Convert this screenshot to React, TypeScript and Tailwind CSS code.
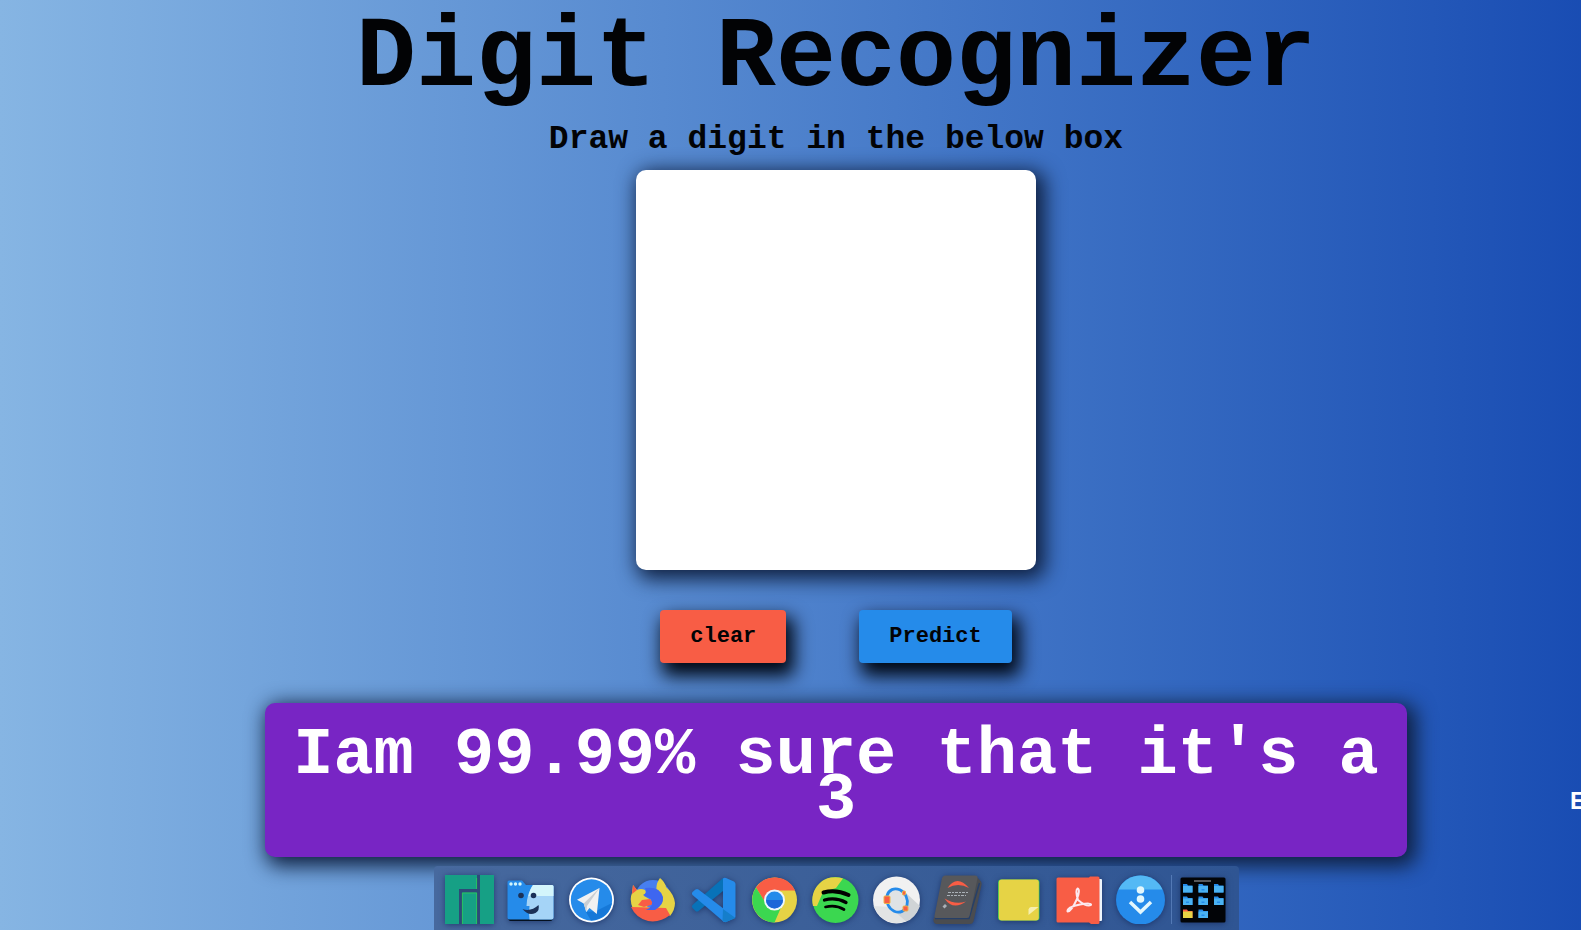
import React from "react";

const mono = "font-['Liberation_Mono',monospace]";

function Icon({ label, children }: { label: string; children: React.ReactNode }) {
  return (
    <li className="flex w-[61px] justify-center">
      <button type="button" aria-label={label} className="block drop-shadow-[0_1px_3px_rgba(20,40,90,0.7)]">
        <svg width="49" height="49" viewBox="0 0 49 49" aria-hidden="true">
          {children}
        </svg>
      </button>
    </li>
  );
}

const folderSpots = [
  [5, 10.5], [20.5, 10.5], [36, 10.5],
  [5, 23], [20.5, 23], [36, 23],
  [5, 36], [20.5, 36],
];

function Dock() {
  return (
    <nav aria-label="Dock" className="mt-[9px] rounded-t-[4px] bg-linear-to-r from-[#47699e] to-[#2f5593] pt-[9px] pr-[6px] pb-[6px] pl-[5px]">
      <ul className="flex">
        <Icon label="Manjaro">
          <path fill="#2d4a78" d="M13 13H36V49H13ZM31 0H36V14H31Z" />
          <path fill="#16a085" d="M0 0H32V14H14V49H0ZM17 17.500H32V49H17ZM35 0H49V49H35Z" />
          <path fill="none" stroke="#2ecc55" strokeWidth="0.8" d="M17.400 49V18H31.600V49M31.600 3V14" />
        </Icon>
        <Icon label="Files">
          <rect x="2.500" y="40" width="44" height="6" rx="2" fill="#04101f" />
          <path fill="#258bea" d="M1.500 7Q1.500 5.500 3 5.500H16L20 10H46Q47.500 10 47.500 11.500V42.500Q47.500 44.500 45.500 44.500H3.500Q1.500 44.500 1.500 42.500Z" />
          <path fill="#a5d4f7" d="M27 10H46Q47.500 10 47.500 11.500V42.500Q47.500 44.500 45.500 44.500H23.500Q22.500 38 23.500 31H20.500Q21 18 27 10Z" />
          <path fill="#d3f5fb" d="M27 10H46Q47.500 10 47.500 11.500V21H22.500Q24 14 27 10Z" />
          <g fill="#d3f5fb"><circle cx="5" cy="9" r="1.700" /><circle cx="9.500" cy="9" r="1.700" /><circle cx="14" cy="9" r="1.700" /></g>
          <circle cx="15" cy="20.500" r="2.800" fill="#1b3157" /><circle cx="27.500" cy="20.500" r="2.800" fill="#1b3157" />
          <path fill="#1b3157" d="M16.500 34Q25 37 32.500 30Q34 35 29.500 38Q22.500 41.500 16.500 34Z" />
        </Icon>
        <Icon label="Telegram">
          <circle cx="24.500" cy="25" r="22.500" fill="#fff" /><circle cx="24.500" cy="25" r="20.700" fill="#258bea" />
          <path fill="#1678d8" d="M19 37L29 36L45 28Q41 44 24 45.500Z" />
          <path fill="#f1f1f1" d="M10 24.700L32.500 13L29.800 39L22.500 33L19.300 37L16.700 28.500Z" />
          <path fill="#c9ced3" d="M16.700 28.500L32.500 13L20 31L19.300 37Z" />
        </Icon>
        <Icon label="Firefox">
          <circle cx="25" cy="23" r="18" fill="#477ff0" />
          <path fill="#e6d345" d="M32 3Q37 7 38 12Q46 19 47 28Q47 35 42 41L36 34L5 34Q1 25 4 18L5 10L9 15Q13 13 17 15Q19 18 16 21L23 25L19 32Q28 35 32 29Q36 24 30 20Q26 11 32 3Z" />
          <path fill="#f85d45" d="M3 32L38 33L42 40Q32 48 20 46Q8 43 3 32ZM14 25L22 24L26 29L16 32L10 30ZM5 10L9 15L4 19Z" />
          <path fill="#3e66f0" d="M17 13Q32 11 35 22Q36 30 27 35L18 35Q27 31 23 24L15 20Q20 18 17 13Z" />
        </Icon>
        <Icon label="Visual Studio Code">
          <path fill="#0872b8" d="M34 3V16L9.500 36Q8 37 6.500 36L3.500 33Q2.500 31.500 3.500 30Z" />
          <path fill="#258bea" d="M6.500 14.500Q8 13.500 9.500 14.500L35 34V47L3.500 20Q2.500 18.500 3.500 17Z" />
          <path fill="#258bea" d="M34 3.500Q35 2.500 37 3L45 6.500Q46.500 7.500 46.500 9V41.500Q46.500 43 45 43.500L37 47Q35.500 47.500 34 46Z" />
          <path fill="#157ecb" d="M34 34L46.500 43L37 47L33.500 46Z" />
        </Icon>
        <Icon label="Chrome">
          <circle cx="24.500" cy="25" r="22.500" fill="#e6d345" />
          <path fill="#f85d45" d="M6 12.500A22.500 22.500 0 0 1 45.200 15.500H24.500L15.500 28Z" />
          <path fill="#3bd750" d="M6 12.500L16.500 29.500L24.500 35L32.500 29L24.500 47.500A22.500 22.500 0 0 1 6 12.500Z" />
          <circle cx="24.500" cy="25" r="10.500" fill="#eef5fc" /><circle cx="24.500" cy="25" r="8.500" fill="#258bea" />
          <path fill="#1c66d8" d="M16 25H33A8.500 8.500 0 0 1 16 25Z" />
        </Icon>
        <Icon label="Spotify">
          <circle cx="24.500" cy="25" r="23" fill="#3bd750" />
          <path fill="#e6d345" d="M2 31A23 23 0 0 1 32 3.500L25 13L12 17L6 31Z" />
          <g fill="none" stroke="#000" strokeLinecap="round"><path strokeWidth="4" d="M12.500 17.500Q25 14 37.500 20" /><path strokeWidth="3.300" d="M13.500 25Q25 22 35 27.500" /><path strokeWidth="2.700" d="M14.500 32Q25 29.500 33 34.500" /></g>
        </Icon>
        <Icon label="Community">
          <circle cx="24.500" cy="25" r="23.500" fill="#f1f1f1" />
          <path fill="#e2e4e4" d="M1.500 31L19 32L34 46.500Q12 53 1.500 31Z" />
          <path fill="#d0d4d6" d="M34 18L48 31Q43 44 34 46.500L20 34Z" />
          <ellipse cx="25" cy="25.500" rx="10" ry="12" fill="#dfe3e5" stroke="#258bea" strokeWidth="2.800" transform="rotate(-25 25 25.500)" />
          <g fill="#f85d45" stroke="#e9b64a" strokeWidth="1"><rect x="12" y="21" width="6" height="7.500" rx="1" /><rect x="30.500" y="16" width="3" height="4" rx="1" /><rect x="31" y="31" width="5" height="5" rx="1" /></g>
        </Icon>
        <Icon label="Jupyter">
          <path fill="#4a4c50" d="M43 1L48 6.500Q49 8 48.500 10L40.500 46.500Q39.500 49 37 49H3Q0 48 0.500 44L4 39Z" />
          <path fill="none" stroke="#263f68" strokeWidth="1.500" d="M2 43.500H36L46.500 8" />
          <path fill="#57585b" d="M12 0.500H42Q45 0.500 44.500 3.500L36.500 41Q36 43 34 43H3Q1 43 1.500 40.500L9 3Q10 0.500 12 0.500Z" />
          <path fill="#f85d45" d="M14.500 13Q24 -1 36 13Q25 7 14.500 13ZM11.500 23.500Q22 30 33 26.500Q20 36 11.500 23.500Z" />
          <path stroke="#aab0b7" strokeWidth="1" strokeDasharray="3 1 2 1" d="M15 17.500H35M14 20.500H33" />
          <path fill="#aab0b7" d="M12 29L14 31L11.500 33.500L9.500 31.500Z" />
        </Icon>
        <Icon label="Notes">
          <rect x="4" y="4.500" width="41.500" height="41" rx="3" fill="#3bc552" /><rect x="4.800" y="4.500" width="40" height="41" rx="3" fill="#e6d345" />
          <path fill="#f6efae" d="M34.500 40V34.500Q35 32 37 32H44.500Z" />
        </Icon>
        <Icon label="PDF Reader">
          <rect x="40" y="4" width="7" height="42" rx="1" fill="#eef5fc" />
          <path fill="#f85d45" d="M3 2.500H34L35 1.500H43Q44.500 1.500 44.500 3V47.500Q44.500 49 43 49H36L34 47.500H3Q1.500 47.500 1.500 46V4Q1.500 2.500 3 2.500Z" />
          <path fill="none" stroke="#fce9f0" strokeWidth="2" strokeLinejoin="round" d="M23 25Q20 15 22.500 13.500Q25.500 14.500 22 24Q16 37 12.500 36.500Q12 32 25 29.500Q37 27.500 36 30Q32 32.500 23 25Z" />
        </Icon>
        <Icon label="Downloads">
          <circle cx="24.500" cy="25" r="24.500" fill="#258bea" />
          <path fill="#54b9f5" d="M2.400 14.500A24.500 24.500 0 0 1 46.600 14.500Z" />
          <circle cx="24.500" cy="15" r="3.800" fill="#e2f7fd" /><circle cx="24.500" cy="24" r="3.800" fill="#e2f7fd" />
          <path fill="none" stroke="#e2f7fd" strokeWidth="3.500" d="M14 27L24.500 37L35 27" />
        </Icon>
        <li aria-hidden="true" className="w-px bg-[#5379b5]" />
        <Icon label="Folder grid">
          <rect x="2.500" y="2.500" width="45" height="45" rx="1.500" fill="#020407" />
          <rect x="16" y="5" width="17" height="2" fill="#57585b" />
          {folderSpots.map(([x, y], i) => (
            <g key={i} transform={`translate(${x} ${y})`}>
              <path fill={i === 6 ? "#f85d45" : "#258bea"} d="M0 -1.500H4L5 0H9.500V7H0Z" />
              <rect y="0.500" width="9.500" height="6.500" fill={i === 6 ? "#e6d345" : "#4ab2f2"} />
              {i !== 6 && i !== 0 && i !== 2 && <rect x="3" y="3.500" width="3" height="1.500" fill="#258bea" />}
            </g>
          ))}
        </Icon>
      </ul>
    </nav>
  );
}

export default function App() {
  return (
    <div className="min-h-screen overflow-hidden">
      <div className={`relative flex min-h-screen w-[calc(100%+91px)] flex-col items-center bg-linear-to-r from-[#86b5e3] to-[#1346b0] text-[#020305] ${mono}`}>
        <h1 className="text-[100px] leading-[118px] font-bold whitespace-nowrap">Digit Recognizer</h1>
        <p id="prompt" className="mt-[2px] text-[33px] leading-[40px] font-bold whitespace-nowrap">Draw a digit in the below box</p>
        <canvas width={400} height={400} aria-labelledby="prompt" className="mt-[10px] size-[400px] shrink-0 rounded-[10px] bg-white shadow-[5px_5px_20px_4px_#0f2040]" />
        <div className="mt-10 flex gap-[73px] text-[22px] leading-[53px] font-bold">
          <button type="button" className="rounded-[4px] bg-[#f85d45] px-[30px] shadow-[5px_10px_18px_3px_#000814]">clear</button>
          <button type="button" className="rounded-[4px] bg-[#258bea] px-[30px] shadow-[5px_10px_18px_3px_#000814]">Predict</button>
        </div>
        <output className="mt-10 block w-[1142px] max-w-[90%] rounded-[10px] bg-[#7825c4] px-7 pt-[30px] pb-[34px] text-center text-[67px] leading-[45px] font-bold text-white shadow-[5px_5px_20px_4px_#0f2040]">
          Iam 99.99% sure that it's a 3
        </output>
        <Dock />
        <span className="absolute top-[788px] right-[86px] w-[16px] text-center font-['Liberation_Sans',sans-serif] text-[24px] leading-[25px] font-bold text-white">E</span>
      </div>
    </div>
  );
}
